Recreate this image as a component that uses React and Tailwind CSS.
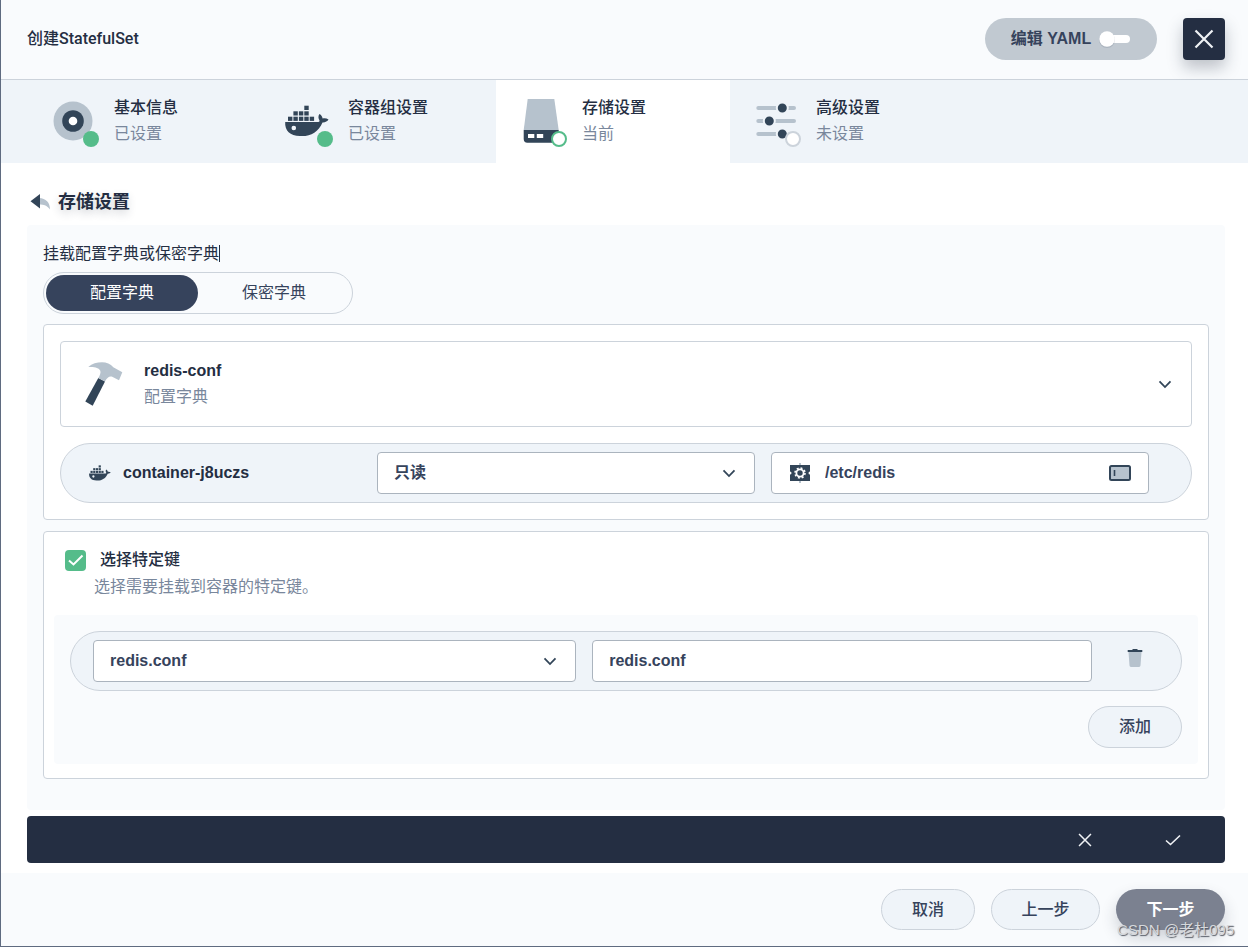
import React from "react";

function Docker({ className }) {
  return (
    <svg viewBox="0 0 52 52" className={className} fill="#324558" aria-hidden="true">
      <rect x="23.3" y="10.7" width="4.4" height="4.3" />
      <rect x="12.4" y="16.3" width="4.4" height="4.2" />
      <rect x="17.9" y="16.3" width="4.4" height="4.2" />
      <rect x="23.3" y="16.3" width="4.4" height="4.2" />
      <rect x="7" y="21.7" width="4.4" height="4.2" />
      <rect x="12.4" y="21.7" width="4.4" height="4.2" />
      <rect x="17.9" y="21.7" width="4.4" height="4.2" />
      <rect x="23.3" y="21.7" width="4.4" height="4.2" />
      <rect x="28.7" y="21.7" width="4.4" height="4.2" />
      <path
        fillRule="evenodd"
        d="M4.2 27H36c2 0 2.700-.6 2.500-1.600-1.400-2-1.400-4.400-.1-6.400 1.900 1 3 2.600 3.200 4.600 2.100-.5 4.100-.2 5.900 1-1.100 2-3.200 2.900-6 2.800C37.500 36.500 30.500 41 21 41h-2C9 41 3.600 35.500 4.200 27zM12.800 30.700a2.300 2.300 0 1 0 0 4.600 2.300 2.300 0 0 0 0-4.600z"
      />
    </svg>
  );
}

function Disc() {
  return (
    <svg viewBox="0 0 52 52" className="size-[52px]" aria-hidden="true">
      <circle cx="26" cy="26" r="19.500" fill="#b6c2cd" />
      <circle cx="26" cy="26" r="10.800" fill="#324558" />
      <circle cx="26" cy="26" r="4.300" fill="#fff" />
    </svg>
  );
}

function Drive() {
  return (
    <svg viewBox="0 0 52 52" className="size-[52px]" aria-hidden="true">
      <path d="M12.700 4h26.600l4.400 31h-35z" fill="#b6c2cd" />
      <path d="M8.700 35h35v9a3.700 3.700 0 0 1-3.700 3.700H12.400A3.700 3.700 0 0 1 8.700 44z" fill="#324558" />
      <path d="M13 39h6.300v4H13zM21.800 39h6.400v4h-6.400z" fill="#fff" />
    </svg>
  );
}

function Sliders() {
  return (
    <svg viewBox="0 0 52 52" className="size-[52px]" aria-hidden="true">
      <path d="M9.300 13H45M9.300 26H45M9.300 39H45" stroke="#b6c2cd" strokeWidth="4" strokeLinecap="round" />
      <g fill="#324558" stroke="#eff4f9" strokeWidth="2">
        <circle cx="33.300" cy="13" r="5.500" />
        <circle cx="20.300" cy="26" r="5.500" />
        <circle cx="33.300" cy="39" r="5.500" />
      </g>
    </svg>
  );
}

function Hammer() {
  return (
    <svg viewBox="0 0 52 52" className="size-[52px] shrink-0" aria-hidden="true">
      <path d="M21.300 20l6.700 3.500-12.300 24.200-7.400-4.200z" fill="#324558" />
      <path
        d="M11.300 9C15 5.500 20 4.300 25 4.300c4.500 0 8.500 1.700 11.300 5l9 5-3.300 8-6.800-3.500c-2.700-1-5.700 1.200-7.200 4.700L21.300 20c1.500-2.500 2.700-5 2-7.300C22 9.500 17 8.500 11.300 9z"
        fill="#b6c2cd"
      />
    </svg>
  );
}

function Gear() {
  return (
    <svg viewBox="0 0 26 26" className="size-[26px] shrink-0" aria-hidden="true">
      <path d="M13 3v20" stroke="#b6c2cd" strokeWidth="2" />
      <path d="M3 5h20v6.500a1.500 1.500 0 0 0 0 3V21H3v-6.500a1.500 1.500 0 0 0 0-3z" fill="#324558" />
      <circle cx="13" cy="13" r="3.600" fill="none" stroke="#fff" strokeWidth="1.800" />
      <circle cx="13" cy="13" r="5" fill="none" stroke="#fff" strokeWidth="1.600" strokeDasharray="1.960 1.960" />
    </svg>
  );
}

function FieldIcon() {
  return (
    <svg viewBox="0 0 26 26" className="size-[26px] shrink-0" aria-hidden="true">
      <rect x="3" y="6" width="20" height="14" rx="1.500" fill="#b6c2cd" stroke="#324558" strokeWidth="2" />
      <path d="M7.500 10v6" stroke="#324558" strokeWidth="1.600" />
    </svg>
  );
}

function Trash() {
  return (
    <svg viewBox="0 0 26 26" className="size-[26px]" aria-hidden="true">
      <path d="M6.500 6h13l-1 13.600A1.500 1.500 0 0 1 17 21H9a1.500 1.500 0 0 1-1.500-1.400z" fill="#b6c2cd" />
      <path d="M5.700 4H10l1-1h4l1 1h4.300v2H5.700z" fill="#324558" />
    </svg>
  );
}

function Chevron({ className = "" }) {
  return (
    <svg viewBox="0 0 20 20" className={"size-5 " + className} fill="none" stroke="#324558" strokeWidth="1.800" aria-hidden="true">
      <path d="M4.500 7.300l5.500 5.700 5.500-5.700" />
    </svg>
  );
}

function Cross({ className }) {
  return (
    <svg viewBox="0 0 20 20" className={className} fill="none" stroke="#f0f2f5" strokeWidth="2.200" aria-hidden="true">
      <path d="M1.500 1.500l17 17M18.500 1.500l-17 17" />
    </svg>
  );
}

const steps = [
  { title: "基本信息", status: "已设置", icon: <Disc />, dot: "bg-[#55bc8a]" },
  { title: "容器组设置", status: "已设置", icon: <Docker className="size-[52px]" />, dot: "bg-[#55bc8a]" },
  { title: "存储设置", status: "当前", icon: <Drive />, dot: "border-2 border-[#55bc8a] bg-white", active: true },
  { title: "高级设置", status: "未设置", icon: <Sliders />, dot: "border-2 border-[#ccd3db] bg-white" },
];

function Select({ label, value }) {
  return (
    <div className="relative min-w-0">
      <select
        aria-label={label}
        defaultValue={value}
        className="h-[42px] w-full appearance-none rounded border border-[#abb4be] bg-white px-4 font-bold text-[#36435c]"
      >
        <option>{value}</option>
      </select>
      <Chevron className="pointer-events-none absolute right-4 top-[11px]" />
    </div>
  );
}

const pill = "rounded-full border border-[#ccd3db] bg-[#eff4f9]";

export default function App() {
  return (
    <div className="relative flex min-h-screen flex-col border-b border-l border-[#5f6b80] bg-white font-['Roboto','Noto_Sans_CJK_SC',sans-serif] text-base leading-6 text-[#242e42]">
      <header className="flex h-20 items-center gap-[26px] border-b border-[#ccd3db] bg-[#f9fbfd] pb-0.5 pl-[26px] pr-[23px]">
        <h1 className="flex-1 font-medium">创建StatefulSet</h1>
        <button
          type="button"
          className="flex h-[42px] w-[172px] items-center justify-center gap-2 rounded-full bg-[#c1c9d1] font-['Liberation_Sans','Noto_Sans_CJK_SC',sans-serif] font-bold text-[#36435c]"
        >
          编辑 YAML
          <svg viewBox="0 0 32 18" className="h-[18px] w-8" fill="#fff" aria-hidden="true">
            <rect x="6" y="5" width="25" height="8" rx="4" />
            <circle cx="8" cy="10" r="8" fill="#36435c" fillOpacity="0.150" />
            <circle cx="8" cy="9" r="7.700" />
          </svg>
        </button>
        <button
          type="button"
          aria-label="关闭"
          className="flex size-[42px] items-center justify-center rounded bg-[#242e42] shadow-[0_8px_16px_0_rgba(36,46,66,0.28)]"
        >
          <Cross className="size-5" />
        </button>
      </header>

      <nav className="flex h-[83px] bg-[#eff4f9] px-[27px]">
        {steps.map((s) => (
          <a
            key={s.title}
            href="#"
            aria-current={s.active ? "step" : undefined}
            className={"flex w-[234px] items-center gap-[15px] pb-0.5 pl-[19px] " + (s.active ? "bg-white" : "")}
          >
            <span className="relative">
              {s.icon}
              <span className={"absolute bottom-0 right-0 size-4 rounded-full " + s.dot} />
            </span>
            <span className="flex flex-col gap-0.5">
              <span className="font-medium">{s.title}</span>
              <span className="text-[#79879c]">{s.status}</span>
            </span>
          </a>
        ))}
      </nav>

      <main className="flex-1 pb-2.5 pl-[26px] pr-[23px] pt-[26px] font-['Liberation_Sans','Noto_Sans_CJK_SC',sans-serif]">
        <div className="flex h-9 items-start gap-[5px]">
          <a href="#" aria-label="返回">
            <svg viewBox="0 0 26 26" className="size-[26px]" aria-hidden="true">
              <path d="M12 9c7 .2 11 4.500 11 11.500-2.500-3.700-6-5-11-5z" fill="#b6c2cd" />
              <path d="M3.500 12.200L13 5v14.500z" fill="#324558" />
            </svg>
          </a>
          <h2 className="text-lg leading-[26px] font-bold [text-shadow:0_4px_8px_rgba(36,46,66,0.2)]">存储设置</h2>
        </div>

        <section className="rounded bg-[#f9fbfd] px-4 pb-[31px] pt-[17px]">
          <p className="mb-1.5">
            <span className="border-r border-[#242e42]">挂载配置字典或保密字典</span>
          </p>
          <div className="mb-2.5 flex h-[42px] w-[310px] rounded-full border border-[#ccd3db] p-0.5 text-[#36435c]">
            <button type="button" aria-pressed="true" className="flex-1 rounded-full bg-[#36435c] text-white">
              配置字典
            </button>
            <button type="button" aria-pressed="false" className="flex-1 rounded-full">
              保密字典
            </button>
          </div>

          <div className="flex flex-col gap-4 rounded border border-[#ccd3db] bg-white p-4">
            <button type="button" className="flex h-[86px] items-center gap-[15px] rounded border border-[#ccd3db] px-4 text-left">
              <Hammer />
              <span className="flex flex-1 flex-col gap-0.5">
                <span className="font-bold">redis-conf</span>
                <span className="text-[#79879c]">配置字典</span>
              </span>
              <Chevron />
            </button>
            <div className={"flex h-[60px] items-center pr-[42px] " + pill}>
              <div className="flex w-[316px] shrink-0 items-center gap-2.5 pl-[26px]">
                <Docker className="size-[26px]" />
                <span className="font-bold">container-j8uczs</span>
              </div>
              <div className="grid flex-1 grid-cols-2 gap-4">
                <Select label="读写模式" value="只读" />
                <label className="flex h-[42px] min-w-0 items-center gap-3 rounded border border-[#abb4be] bg-white px-[15px]">
                  <Gear />
                  <input
                    aria-label="挂载路径"
                    defaultValue="/etc/redis"
                    className="min-w-0 flex-1 bg-transparent font-bold text-[#36435c] outline-none"
                  />
                  <FieldIcon />
                </label>
              </div>
            </div>
          </div>

          <div className="mt-[11px] rounded border border-[#ccd3db] bg-white px-2.5 pb-3.5 pt-4">
            <label className="flex items-center gap-3.5 pl-[11px] font-medium text-[#242e42]">
              <span className="relative size-[21px]">
                <input type="checkbox" defaultChecked className="block size-[21px] appearance-none rounded-sm bg-[#55bc8a]" />
                <svg viewBox="0 0 21 21" className="pointer-events-none absolute inset-0 size-[21px]" fill="none" stroke="#fff" strokeWidth="2" aria-hidden="true">
                  <path d="M4 10.500l4.500 4L17.500 5.500" />
                </svg>
              </span>
              选择特定键
            </label>
            <p className="mb-4 mt-[3px] pl-10 text-[#79879c]">选择需要挂载到容器的特定键。</p>
            <div className="flex flex-col items-end gap-[15px] rounded bg-[#f9fbfd] p-4">
              <div className={"grid h-[60px] w-full grid-cols-[29fr_30fr_54px] items-center gap-4 pl-[22px] pr-[19px] " + pill}>
                <Select label="键" value="redis.conf" />
                <input
                  aria-label="路径"
                  defaultValue="redis.conf"
                  className="h-[42px] min-w-0 rounded border border-[#abb4be] bg-white px-4 font-bold text-[#36435c]"
                />
                <button type="button" aria-label="删除" className="flex justify-center pb-1">
                  <Trash />
                </button>
              </div>
              <button type="button" className={"h-[42px] w-[94px] font-medium text-[#36435c] " + pill}>
                添加
              </button>
            </div>
          </div>
        </section>

        <div className="mt-1.5 flex h-[47px] items-center justify-end rounded bg-[#242e42] pr-2">
          <button type="button" aria-label="取消编辑" className="flex h-full w-[88px] items-center justify-center">
            <Cross className="size-3.5" />
          </button>
          <button type="button" aria-label="确认编辑" className="flex h-full w-[88px] items-center justify-center">
            <svg viewBox="0 0 16 16" className="size-4" fill="none" stroke="#f0f2f5" strokeWidth="1.600" aria-hidden="true">
              <path d="M1 8.500l4.500 4L15 3.500" />
            </svg>
          </button>
        </div>
      </main>

      <footer className="flex justify-end gap-4 bg-[#f9fbfd] pb-4 pr-[23px] pt-4 font-medium text-[#36435c]">
        <button type="button" className={"h-[41px] w-[94px] " + pill}>取消</button>
        <button type="button" className={"h-[41px] w-[109px] " + pill}>上一步</button>
        <button type="button" className="h-[41px] w-[109px] rounded-full bg-[#7b8190] font-bold text-white shadow-[0_8px_16px_0_rgba(36,46,66,0.2)]">
          下一步
        </button>
      </footer>
      <span className="pointer-events-none absolute bottom-1 right-3.5 font-['Liberation_Sans','Noto_Sans_CJK_SC',sans-serif] text-[15px] text-[#d6d8dc] [text-shadow:1px_1px_1px_#555b66]">
        CSDN @老杜095
      </span>
    </div>
  );
}
